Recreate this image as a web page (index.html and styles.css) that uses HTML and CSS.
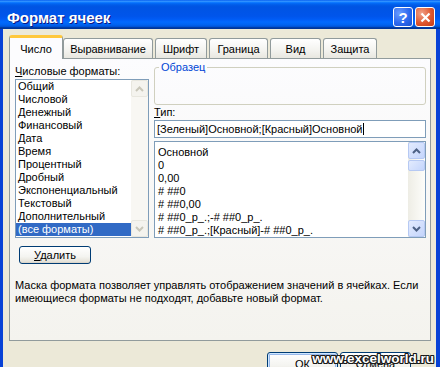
FILE: index.html
```html
<!DOCTYPE html>
<html lang="ru">
    <head>
        <meta charset="UTF-8">
        <title>Формат ячеек</title>
        <link rel="stylesheet" href="styles.css">
    </head>

    <body class="desktop">
        <div class="dialog">
            <header class="dialog__titlebar">
                <span class="dialog__titlebar__title">Формат ячеек</span>
                <span class="dialog__titlebar__button dialog__titlebar__button--help">?</span>
                <span class="dialog__titlebar__button dialog__titlebar__button--close">
                    <svg width="11" height="11" viewBox="0 0 11 11"><path d="M1.5 1.5 L9.5 9.5 M9.5 1.5 L1.5 9.5" stroke="#ffffff" stroke-width="2.2"/></svg>
                </span>
            </header>

            <div class="dialog__client">
                <ul class="tabs">
                    <li class="tabs__tab tabs__tab--active tabs__tab--number">Число</li>
                    <li class="tabs__tab tabs__tab--alignment">Выравнивание</li>
                    <li class="tabs__tab tabs__tab--font">Шрифт</li>
                    <li class="tabs__tab tabs__tab--border">Граница</li>
                    <li class="tabs__tab tabs__tab--fill">Вид</li>
                    <li class="tabs__tab tabs__tab--protection">Защита</li>
                </ul>

                <section class="panel">
                    <div class="panel__columns">
                        <div class="panel__column">
                            <div class="panel__label panel__label--formats"><u>Ч</u>исловые форматы:</div>
                            <div class="listbox listbox--categories">
                                <ul class="listbox__items">
                                    <li class="listbox__item">Общий</li>
                                    <li class="listbox__item">Числовой</li>
                                    <li class="listbox__item">Денежный</li>
                                    <li class="listbox__item">Финансовый</li>
                                    <li class="listbox__item">Дата</li>
                                    <li class="listbox__item">Время</li>
                                    <li class="listbox__item">Процентный</li>
                                    <li class="listbox__item">Дробный</li>
                                    <li class="listbox__item">Экспоненциальный</li>
                                    <li class="listbox__item">Текстовый</li>
                                    <li class="listbox__item">Дополнительный</li>
                                    <li class="listbox__item listbox__item--selected">(все форматы)</li>
                                </ul>
                                <div class="scrollbar scrollbar--disabled">
                                    <span class="scrollbar__button">
                                        <svg width="9" height="6" viewBox="0 0 9 6"><path d="M1 5 L4.5 1.5 L8 5" fill="none" stroke="#c9c7ba" stroke-width="2"/></svg>
                                    </span>
                                    <span class="scrollbar__track"></span>
                                    <span class="scrollbar__button">
                                        <svg width="9" height="6" viewBox="0 0 9 6"><path d="M1 1 L4.5 4.5 L8 1" fill="none" stroke="#c9c7ba" stroke-width="2"/></svg>
                                    </span>
                                </div>
                            </div>
                            <button class="button button--delete"><u>У</u>далить</button>
                        </div>

                        <div class="panel__column">
                            <fieldset class="sample">
                                <legend class="sample__legend">Образец</legend>
                            </fieldset>
                            <div class="panel__label panel__label--type"><u>Т</u>ип:</div>
                            <div class="textbox">[Зеленый]Основной;[Красный]Основной<span class="textbox__caret"></span></div>
                            <div class="listbox listbox--codes">
                                <ul class="listbox__items">
                                    <li class="listbox__item">Основной</li>
                                    <li class="listbox__item">0</li>
                                    <li class="listbox__item">0,00</li>
                                    <li class="listbox__item"># ##0</li>
                                    <li class="listbox__item"># ##0,00</li>
                                    <li class="listbox__item"># ##0_р_.;-# ##0_р_.</li>
                                    <li class="listbox__item"># ##0_р_.;[Красный]-# ##0_р_.</li>
                                </ul>
                                <div class="scrollbar">
                                    <span class="scrollbar__button">
                                        <svg width="9" height="6" viewBox="0 0 9 6"><path d="M1 5 L4.5 1.5 L8 5" fill="none" stroke="#4d6185" stroke-width="2"/></svg>
                                    </span>
                                    <span class="scrollbar__thumb"></span>
                                    <span class="scrollbar__track"></span>
                                    <span class="scrollbar__button">
                                        <svg width="9" height="6" viewBox="0 0 9 6"><path d="M1 1 L4.5 4.5 L8 1" fill="none" stroke="#4d6185" stroke-width="2"/></svg>
                                    </span>
                                </div>
                            </div>
                        </div>
                    </div>

                    <p class="panel__hint">Маска формата позволяет управлять отображением значений в ячейках. Если имеющиеся форматы не подходят, добавьте новый формат.</p>
                </section>

                <div class="dialog__buttons">
                    <button class="button button--default">ОК</button>
                    <button class="button">Отмена</button>
                    <span class="watermark">www.excelworld.ru</span>
                </div>
            </div>
        </div>
    </body>
</html>
```

FILE: styles.css
```css
html,
body {
    border: none;
    margin: 0 0 0 0;
    padding: 0 0 0 0;
}

:root {
    --color-frame: #0842d6;
    --color-face: #ece9d8;
    --color-tab-border: #919b9c;
    --color-field-border: #7f9db9;
    --color-selection: #316ac5;
    --color-group: #0046d5;
}

.desktop {
    width: 440px;
    height: 367px;
    overflow: hidden;
    background: var(--color-frame);
    color: #000000;
    font-family: "Liberation Sans", Arial, sans-serif;
    font-size: 11px;
    line-height: 13px;
}

/* title bar */

.dialog__titlebar {
    display: flex;
    align-items: center;
    box-sizing: border-box;
    height: 29px;
    padding: 5px 5px 0 7px;
    background: linear-gradient(to bottom, #0058ee 0%, #3593ff 4%, #288eff 6%, #127dff 8%, #036ffc 10%, #0262ee 14%, #0057e5 20%, #0054e3 24%, #0055eb 56%, #005bf5 66%, #026afe 76%, #0062ef 86%, #0052d6 92%, #0040ab 94%, #003092 100%);
}

.dialog__titlebar__title {
    flex: 1;
    color: #ffffff;
    font-size: 15px;
    font-weight: bold;
    text-shadow: 1px 1px #0a1883;
}

.dialog__titlebar__button {
    display: flex;
    align-items: center;
    justify-content: center;
    box-sizing: border-box;
    width: 20px;
    height: 20px;
    margin-left: 2px;
    border: 1px solid #ffffff;
    border-radius: 3px;
    color: #ffffff;
    font-size: 15px;
    font-weight: bold;
}

.dialog__titlebar__button--help {
    background: radial-gradient(circle at 30% 30%, #6a9cff 0%, #2d69ee 55%, #1a4fd0 100%);
}

.dialog__titlebar__button--close {
    background: radial-gradient(circle at 30% 30%, #f0a28a 0%, #e0572f 55%, #c53a15 100%);
}

/* client area */

.dialog__client {
    box-sizing: border-box;
    height: 338px;
    margin: 0 4px 0 3px;
    padding: 0 5px 0 6px;
    background: var(--color-face);
}

.tabs {
    display: flex;
    align-items: flex-end;
    height: 29px;
    margin: 0 0 0 0;
    padding: 0 0 0 0;
    list-style: none;
}

.tabs__tab {
    position: relative;
    box-sizing: border-box;
    height: 20px;
    margin-right: 2px;
    padding-top: 4px;
    border: 1px solid var(--color-tab-border);
    border-bottom: none;
    border-radius: 3px 3px 0 0;
    background: linear-gradient(to bottom, #ffffff, #f3f3ef 60%, #e8e7e0);
    text-align: center;
}

.tabs__tab--active {
    z-index: 1;
    height: 24px;
    margin-right: 0;
    margin-bottom: -1px;
    padding-top: 5px;
    border-top: 3px solid #ffc83c;
    background: #fcfcfe;
}

.tabs__tab--number {
    width: 54px;
}

.tabs__tab--alignment {
    width: 90px;
}

.tabs__tab--font {
    width: 52px;
}

.tabs__tab--border {
    width: 59px;
}

.tabs__tab--fill {
    width: 51px;
}

.tabs__tab--protection {
    width: 54px;
}

.panel {
    box-sizing: border-box;
    height: 283px;
    padding: 2px 4px 0 5px;
    border: 1px solid var(--color-tab-border);
    background: linear-gradient(to bottom, #fcfcfe, #f4f3ee);
}

.panel__columns {
    display: grid;
    grid-template-columns: 134px 1fr;
    column-gap: 5px;
}

.panel__column {
    display: flex;
    flex-direction: column;
}

.panel__label--formats {
    margin-top: 4px;
}

.panel__label--type {
    margin-top: 1px;
}

.panel__hint {
    margin: 15px 0 0 0;
}

/* list boxes */

.listbox {
    display: flex;
    box-sizing: border-box;
    border: 1px solid var(--color-field-border);
    background: #ffffff;
}

.listbox--categories {
    height: 159px;
    margin-top: 1px;
}

.listbox--codes {
    height: 97px;
    margin-top: 3px;
}

.listbox__items {
    flex: 1;
    margin: 0 0 0 0;
    padding: 0 0 0 0;
    list-style: none;
    white-space: nowrap;
    overflow: hidden;
}

.listbox--codes .listbox__items {
    padding-top: 4px;
}

.listbox__item {
    height: 13px;
    padding-left: 2px;
}

.listbox--codes .listbox__item {
    padding-left: 3px;
}

.listbox__item--selected {
    background: var(--color-selection);
    color: #ffffff;
}

.scrollbar {
    display: flex;
    flex-direction: column;
    width: 17px;
    background: linear-gradient(to right, #eeede5, #fdfdfa);
}

.scrollbar__button,
.scrollbar__thumb {
    display: flex;
    align-items: center;
    justify-content: center;
    box-sizing: border-box;
    height: 17px;
    border: 1px solid #b6c9f3;
    border-radius: 2px;
    background: linear-gradient(135deg, #e3ebfe, #c4d5fc);
}

.scrollbar__thumb {
    height: 11px;
    margin-top: 1px;
}

.scrollbar__track {
    flex: 1;
}

.scrollbar--disabled {
    background: #f8f7f3;
}

.scrollbar--disabled .scrollbar__button {
    border-color: #e8e7df;
    background: #f4f3ee;
}

/* fields */

.sample {
    box-sizing: border-box;
    height: 44px;
    margin: 0 0 0 0;
    padding: 0 0 0 0;
    border: 1px solid #d0d0bf;
    border-radius: 3px;
}

.sample__legend {
    margin-left: 4px;
    padding: 0 2px;
    color: var(--color-group);
    line-height: 13px;
}

.textbox {
    box-sizing: border-box;
    height: 18px;
    margin-top: 1px;
    padding: 0 2px;
    border: 1px solid var(--color-field-border);
    background: #ffffff;
    line-height: 16px;
    white-space: nowrap;
}

.textbox__caret {
    display: inline-block;
    width: 1px;
    height: 12px;
    margin-left: 1px;
    vertical-align: -2px;
    background: #000000;
}

/* buttons */

.button {
    box-sizing: border-box;
    height: 23px;
    padding: 0 0 0 0;
    border: 1px solid #003c74;
    border-radius: 3px;
    background: linear-gradient(to bottom, #ffffff, #f4f4f0 60%, #e6e3da 90%, #d6d0c5);
    color: #000000;
    font-family: inherit;
    font-size: 11px;
}

.button--delete {
    align-self: flex-start;
    width: 72px;
    height: 18px;
    margin: 8px 0 0 4px;
}

.button--default {
    box-shadow: inset 0 0 0 1px #cee7ff, inset 0 0 0 2px #98b8ea;
}

.dialog__buttons {
    position: relative;
    display: flex;
    justify-content: flex-end;
    gap: 2px;
    margin-top: 11px;
    padding-right: 20px;
}

.dialog__buttons .button {
    width: 71px;
}

.watermark {
    position: absolute;
    top: -1px;
    right: -3px;
    color: #ffffff;
    font-size: 13.5px;
    font-weight: bold;
    line-height: 15px;
    text-shadow: -1px 0 #1a1a1a, 1px 0 #1a1a1a, 0 -1px #1a1a1a, 0 1px #1a1a1a, -1px -1px #1a1a1a, 1px 1px #1a1a1a, -1px 1px #1a1a1a, 1px -1px #1a1a1a;
}
```
